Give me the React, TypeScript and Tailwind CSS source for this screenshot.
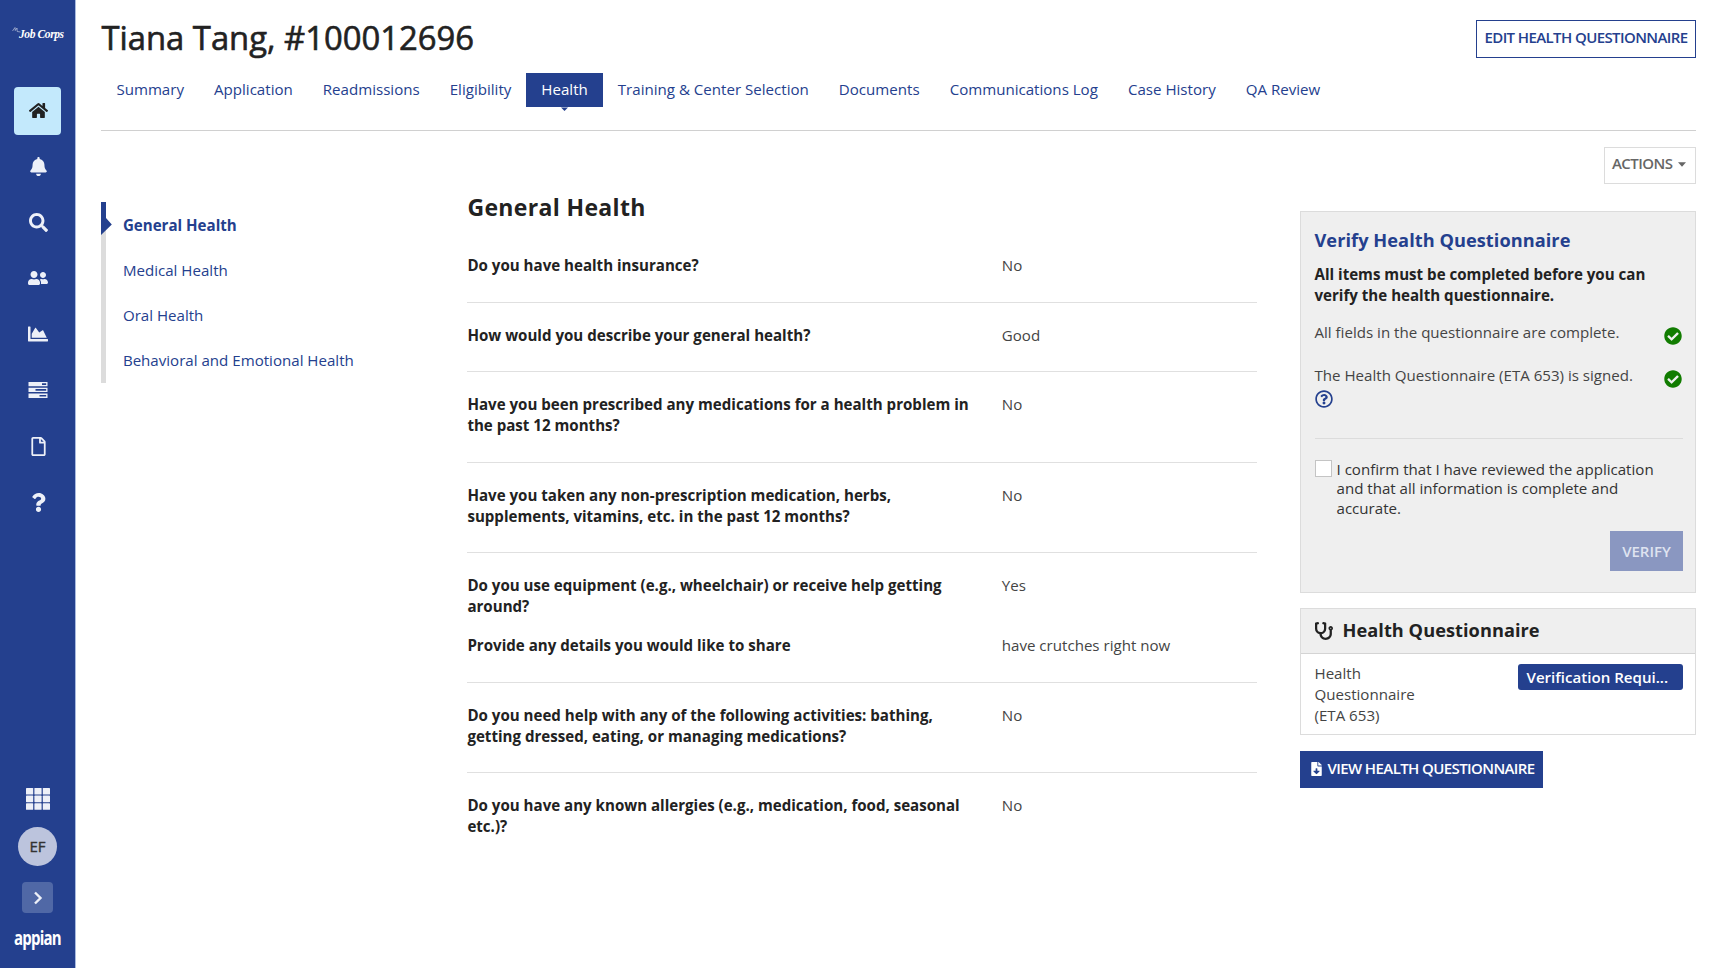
import type { ReactNode } from "react";
import { FaBell, FaChartArea, FaCheckCircle, FaFileDownload, FaHome, FaQuestion, FaRegFile, FaRegQuestionCircle, FaSearch, FaStethoscope, FaUserFriends } from "react-icons/fa";

function TasksIcon({ size }: { size: number }) {
  return (
    <svg width={size} height={size * 0.8} viewBox="0 0 20 16" fill="currentColor">
      <path fillRule="evenodd" d="M0.5 0 H19.5 V4.3 H0.5 Z M14 1.3 V3 H18.2 V1.3 Z" />
      <path fillRule="evenodd" d="M0.5 5.8 H19.5 V10.1 H0.5 Z M7.5 7.1 V8.8 H18.2 V7.1 Z" />
      <path fillRule="evenodd" d="M0.5 11.6 H19.5 V15.9 H0.5 Z M11.5 12.9 V14.6 H18.2 V12.9 Z" />
    </svg>
  );
}

const navIcons = [
  { name: "Home", icon: FaHome, size: 19, active: true },
  { name: "Notifications", icon: FaBell, size: 19 },
  { name: "Search", icon: FaSearch, size: 19 },
  { name: "People", icon: FaUserFriends, size: 20 },
  { name: "Reports", icon: FaChartArea, size: 20 },
  { name: "Tasks", icon: TasksIcon, size: 20 },
  { name: "Documents", icon: FaRegFile, size: 19 },
  { name: "Help", icon: FaQuestion, size: 19 },
];

const tabs = [
  "Summary", "Application", "Readmissions", "Eligibility", "Health",
  "Training & Center Selection", "Documents", "Communications Log", "Case History", "QA Review",
];

const sections = ["General Health", "Medical Health", "Oral Health", "Behavioral and Emotional Health"];

const questions = [
  [{ q: "Do you have health insurance?", a: "No" }],
  [{ q: "How would you describe your general health?", a: "Good" }],
  [{ q: "Have you been prescribed any medications for a health problem in the past 12 months?", a: "No" }],
  [{ q: "Have you taken any non-prescription medication, herbs, supplements, vitamins, etc. in the past 12 months?", a: "No" }],
  [
    { q: "Do you use equipment (e.g., wheelchair) or receive help getting around?", a: "Yes" },
    { q: "Provide any details you would like to share", a: "have crutches right now" },
  ],
  [{ q: "Do you need help with any of the following activities: bathing, getting dressed, eating, or managing medications?", a: "No" }],
  [{ q: "Do you have any known allergies (e.g., medication, food, seasonal etc.)?", a: "No" }],
];

function Sidebar() {
  return (
    <aside className="flex w-[76px] shrink-0 flex-col items-center border-r border-[#a9bbe0] bg-[#24408e] text-[#edf0f8]">
      <div className="flex h-[87px] w-full items-start pl-3 pt-[26px] text-white">
        <svg width="9" height="8" viewBox="0 0 9 8" fill="none" stroke="currentColor" strokeWidth="0.6" className="shrink-0 opacity-80">
          <path d="M0.5 5 L3 1.5 L3.3 4.5 L5 2 L5.2 5.5 L8.5 6" />
        </svg>
        <span className="-ml-[2px] mt-[1px] whitespace-nowrap font-['Liberation_Serif',serif] text-[11.5px] font-bold italic leading-[15px] tracking-[-0.4px]">Job Corps</span>
      </div>
      <nav className="flex flex-col gap-2">
        {navIcons.map(({ name, icon: Icon, size, active }) => (
          <a key={name} className={`flex h-12 w-[47px] items-center justify-center rounded pb-[2px] pl-[1px] ${active ? "bg-[#c3e9fc] text-[#222]" : ""}`}>
            <Icon size={size} />
          </a>
        ))}
      </nav>
      <div className="mt-auto flex flex-col items-center pb-[18px]">
        <svg width="24" height="22" viewBox="0 0 24 22" fill="currentColor">
          {[0, 8.4, 16.8].map(x => [0, 7.6, 15.2].map(y => <rect key={`${x}-${y}`} x={x} y={y} width="7.2" height="6.6" rx="0.6" />))}
        </svg>
        <div className="mt-[17px] flex h-[39px] w-[39px] items-center justify-center rounded-full bg-[#bcc4dd] text-[15px] text-[#333] [-webkit-text-stroke:0.4px]">EF</div>
        <div className="mt-[16px] flex h-[31px] w-[31px] items-center justify-center rounded bg-[#5068a6]">
          <svg width="10" height="14" viewBox="0 0 10 14" fill="none" stroke="currentColor" strokeWidth="2.4"><path d="M2 1.5 L7.5 7 L2 12.5" /></svg>
        </div>
        <div className="mt-[13px] h-6 w-[47px] origin-left scale-x-[0.77] text-[19.5px] font-bold leading-6 tracking-[-1px] text-white">appian</div>
      </div>
    </aside>
  );
}

function Header() {
  return (
    <header className="border-b border-[#d0d0d0]">
      <div className="flex h-[73px] items-start justify-between">
        <h1 className="pt-[14px] text-[32.8px] leading-[48px] [-webkit-text-stroke:0.6px]">Tiana Tang, #100012696</h1>
        <button className="mt-5 h-[38px] w-[220px] whitespace-nowrap border border-[#24408e] pb-1 text-[15px] font-semibold tracking-[-0.6px] text-[#24408e]">EDIT HEALTH QUESTIONNAIRE</button>
      </div>
      <div className="flex h-[57px] items-start">
        {tabs.map(t => (
          <a key={t} className={`relative flex h-[34px] items-center whitespace-nowrap px-[15px] pb-[2px] ${t === "Health" ? "bg-[#24408e] text-white" : "text-[#24408e]"}`}>
            {t}
            {t === "Health" && (
              <svg className="absolute left-[35px] top-[34px]" width="7" height="4" viewBox="0 0 7 4" fill="#24408e"><path d="M0 0.5 H7 L3.5 4 Z" /></svg>
            )}
          </a>
        ))}
      </div>
    </header>
  );
}

function SectionNav() {
  return (
    <div className="mt-[18px] flex h-[181px] w-[366px] shrink-0">
      <div className="relative w-[5px] bg-[#dcdcdc]">
        <svg className="absolute left-0 top-0" width="11" height="33" viewBox="0 0 11 33" fill="#24408e"><path d="M0 0 H5 V16 L10.8 22.5 L0 33 Z" /></svg>
      </div>
      <ul className="pt-[0.5px]">
        {sections.map((s, i) => (
          <li key={s} className={`flex h-[45.1px] items-center pl-[16.5px] text-[#24408e] ${i === 0 ? "font-bold" : ""}`}>{s}</li>
        ))}
      </ul>
    </div>
  );
}

function Questions() {
  return (
    <main className="w-[790px] shrink-0">
      <h2 className="mt-[6px] text-[23px] font-bold leading-[34px] tracking-[0.35px]">General Health</h2>
      <div className="pt-[9.4px]">
        {questions.map((group, i) => (
          <div key={i} className={`flex flex-col gap-[18px] pb-[25.5px] pt-[22px] ${i < questions.length - 1 ? "border-b border-[#e0e0e0]" : ""}`}>
            {group.map(({ q, a }) => (
              <div key={q} className="flex">
                <div className="w-[534.4px] pr-[22px] font-bold">{q}</div>
                <div className="text-[#444]">{a}</div>
              </div>
            ))}
          </div>
        ))}
      </div>
    </main>
  );
}

function CheckRow({ children }: { children: ReactNode }) {
  return (
    <div className="flex h-[43px] justify-between text-[#444]">
      <div>{children}</div>
      <FaCheckCircle size={18} className="mt-[5px] mr-px shrink-0 text-[#117c00]" />
    </div>
  );
}

function VerifyPanel() {
  return (
    <section className="h-[382px] border border-[#dcdcdc] bg-[#efefef] pl-[13.5px] pr-[12px] pt-[14px]">
      <h3 className="text-[18.2px] font-bold leading-7 tracking-[0.05px] text-[#24408e]">Verify Health Questionnaire</h3>
      <p className="mt-[9.5px] font-bold">All items must be completed before you can verify the health questionnaire.</p>
      <div className="mt-[16.5px]">
        <CheckRow>All fields in the questionnaire are complete.</CheckRow>
        <CheckRow>
          The Health Questionnaire (ETA 653) is signed.
          <FaRegQuestionCircle size={18} className="mt-[4px] text-[#24408e]" />
        </CheckRow>
      </div>
      <div className="mt-[30px] border-t border-[#dcdcdc] pt-[21px]">
        <label className="flex leading-[19.4px] text-[#333]">
          <span className="mr-[5px] h-[17px] w-[17px] shrink-0 border border-[#c4c4c4] bg-white" />
          <span className="w-[330px]">I confirm that I have reviewed the application and that all information is complete and accurate.</span>
        </label>
        <button className="ml-auto mt-[13px] flex h-[40px] w-[73px] items-center justify-center bg-[#8a97c1] text-[15px] font-semibold text-[#dfe3f0]">VERIFY</button>
      </div>
    </section>
  );
}

function StatusPanel() {
  return (
    <section className="mt-[15px] h-[127px] border border-[#dcdcdc]">
      <h3 className="flex h-[45px] items-center gap-[10px] border-b border-[#d4d4d4] bg-[#efefef] px-[13.5px] pb-px text-[18.2px] font-bold tracking-[0.05px]">
        <FaStethoscope size={18} />Health Questionnaire
      </h3>
      <div className="flex justify-between pl-[13.5px] pr-[12px] pt-[9px]">
        <div className="w-[120px] text-[#444]">Health Questionnaire (ETA 653)</div>
        <span className="mt-[1px] h-[26px] w-[165.5px] rounded-[3px] bg-[#24408e] px-[9px] font-semibold leading-[26px] text-white">Verification Requi...</span>
      </div>
    </section>
  );
}

export default function App() {
  return (
    <div className="flex h-[968px] w-[1722px] overflow-hidden bg-white font-['Open_Sans',sans-serif] text-[15.1px] leading-[21px] text-[#222]">
      <Sidebar />
      <div className="flex flex-1 flex-col pl-[25.4px] pr-[26px]">
        <Header />
        <div className="flex justify-end pt-4">
          <button className="flex h-[37px] w-[92px] items-center gap-[6px] border border-[#dcdcdc] pb-[4px] pl-[7px] text-[15px] font-semibold tracking-[-0.55px] text-[#666]">
            ACTIONS
            <svg width="8" height="5" viewBox="0 0 9 5" fill="currentColor" className="mt-[2px]"><path d="M0 0 H9 L4.5 5 Z" /></svg>
          </button>
        </div>
        <div className="flex">
          <SectionNav />
          <Questions />
          <div className="ml-auto w-[396px] pt-[27px]">
            <VerifyPanel />
            <StatusPanel />
            <button className="mt-4 flex h-[37px] w-[243px] items-center gap-[5.5px] whitespace-nowrap bg-[#24408e] pb-[2px] pl-[11px] text-[15px] font-semibold tracking-[-0.6px] text-white">
              <FaFileDownload size={14} className="w-[11px] shrink-0" />VIEW HEALTH QUESTIONNAIRE
            </button>
          </div>
        </div>
      </div>
    </div>
  );
}
